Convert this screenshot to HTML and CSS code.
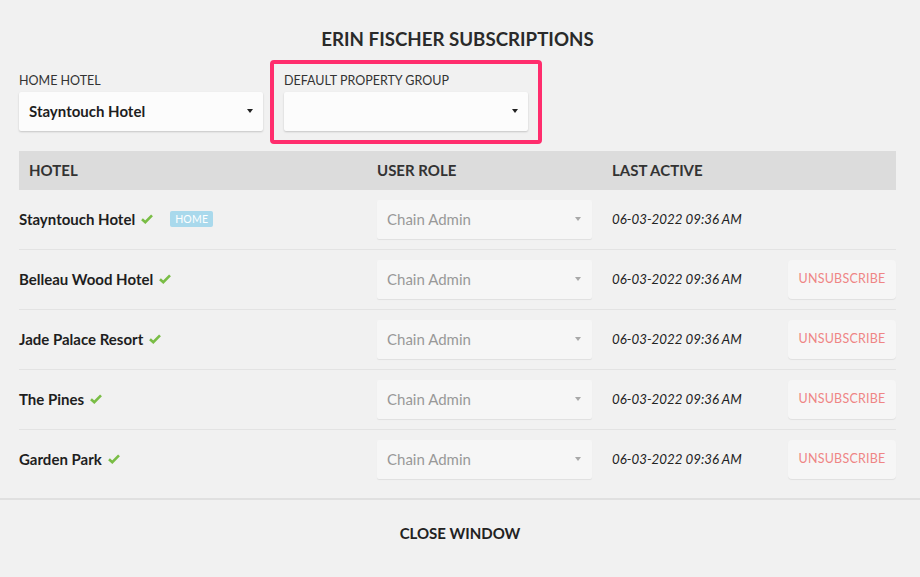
FILE: index.html
```html
<!DOCTYPE html>
<html>
<head>
<meta charset="utf-8">
<link rel="stylesheet" href="styles.css">
</head>
<body>
<div class="modal">
  <div class="content">
    <h1 class="title">ERIN FISCHER SUBSCRIPTIONS</h1>
    <div class="fields">
      <div class="field">
        <div class="label">HOME HOTEL</div>
        <div class="select strong"><span>Stayntouch Hotel</span><i class="caret"></i></div>
      </div>
      <div class="field highlight">
        <div class="label">DEFAULT PROPERTY GROUP</div>
        <div class="select strong"><span></span><i class="caret"></i></div>
      </div>
    </div>
    <div class="table">
      <div class="thead">
        <div class="th first">HOTEL</div>
        <div class="th">USER ROLE</div>
        <div class="th">LAST ACTIVE</div>
        <div class="th"></div>
      </div>
      <div class="row">
        <div class="hotel">Stayntouch Hotel <svg class="check" viewBox="0 0 12 10" width="12" height="10"><path d="M1 5.2 L4.3 8.2 L11 1.3" fill="none" stroke="#79bd45" stroke-width="2.6"/></svg><span class="badge">HOME</span></div>
        <div><div class="select role"><span>Chain Admin</span><i class="caret light"></i></div></div>
        <div class="date">06-03-2022 09:36 AM</div>
        <div></div>
      </div>
      <div class="row">
        <div class="hotel">Belleau Wood Hotel <svg class="check" viewBox="0 0 12 10" width="12" height="10"><path d="M1 5.2 L4.3 8.2 L11 1.3" fill="none" stroke="#79bd45" stroke-width="2.6"/></svg></div>
        <div><div class="select role"><span>Chain Admin</span><i class="caret light"></i></div></div>
        <div class="date">06-03-2022 09:36 AM</div>
        <div><button class="unsub">UNSUBSCRIBE</button></div>
      </div>
      <div class="row">
        <div class="hotel">Jade Palace Resort <svg class="check" viewBox="0 0 12 10" width="12" height="10"><path d="M1 5.2 L4.3 8.2 L11 1.3" fill="none" stroke="#79bd45" stroke-width="2.6"/></svg></div>
        <div><div class="select role"><span>Chain Admin</span><i class="caret light"></i></div></div>
        <div class="date">06-03-2022 09:36 AM</div>
        <div><button class="unsub">UNSUBSCRIBE</button></div>
      </div>
      <div class="row">
        <div class="hotel">The Pines <svg class="check" viewBox="0 0 12 10" width="12" height="10"><path d="M1 5.2 L4.3 8.2 L11 1.3" fill="none" stroke="#79bd45" stroke-width="2.6"/></svg></div>
        <div><div class="select role"><span>Chain Admin</span><i class="caret light"></i></div></div>
        <div class="date">06-03-2022 09:36 AM</div>
        <div><button class="unsub">UNSUBSCRIBE</button></div>
      </div>
      <div class="row last">
        <div class="hotel">Garden Park <svg class="check" viewBox="0 0 12 10" width="12" height="10"><path d="M1 5.2 L4.3 8.2 L11 1.3" fill="none" stroke="#79bd45" stroke-width="2.6"/></svg></div>
        <div><div class="select role"><span>Chain Admin</span><i class="caret light"></i></div></div>
        <div class="date">06-03-2022 09:36 AM</div>
        <div><button class="unsub">UNSUBSCRIBE</button></div>
      </div>
    </div>
  </div>
  <div class="footer">CLOSE WINDOW</div>
</div>
</body>
</html>
```

FILE: styles.css
```css
* { box-sizing: border-box; }
html, body { margin: 0; padding: 0; }
body {
  width: 920px;
  height: 577px;
  background: #f1f1f1;
  font-family: "Lato", "Open Sans", sans-serif;
  color: #222;
  overflow: hidden;
}
.modal { display: flex; flex-direction: column; height: 577px; }
.content { padding: 0 24px 0 19px; }
.title {
  margin: 0;
  padding-top: 28px;
  height: 60px;
  text-align: center;
  font-size: 18.7px;
  font-weight: 700;
  line-height: 22px;
  color: #2a2a2a;
}
.fields { display: flex; align-items: flex-start; gap: 7px; }
.field { width: 244px; margin-top: 14px; }
.field.highlight {
  margin-top: 0;
  width: 272px;
  border: 4px solid #ff2d6d;
  border-radius: 4px;
  padding: 10px 10px 9px 10px;
}
.label {
  font-size: 12.5px;
  line-height: 14px;
  color: #333;
  margin-bottom: 4px;
}
.select {
  height: 39px;
  background: #fcfcfc;
  border-radius: 2px;
  box-shadow: 0 1px 2px rgba(0,0,0,0.18);
  display: flex;
  align-items: center;
  justify-content: space-between;
  padding: 0 10px 2px;
}
.select.strong { font-weight: 700; font-size: 15px; color: #1e1e1e; }
.caret {
  width: 0; height: 0;
  border-left: 3.5px solid transparent;
  border-right: 3.5px solid transparent;
  border-top: 4px solid #222;
}
.caret.light { border-top-color: #a8a8a8; }
.table { width: 877px; margin-top: 7px; }
.thead, .row {
  display: grid;
  grid-template-columns: 358px 235px 176px 108px;
  align-items: center;
}
.thead {
  height: 39px;
  background: #dcdcdc;
  font-weight: 700;
  font-size: 15px;
  color: #333;
  padding-bottom: 2px;
}
.th.first { padding-left: 10px; }
.row {
  height: 60px;
  border-bottom: 1px solid #e3e3e3;
}
.row.last { border-bottom: none; height: 59px; }
.hotel {
  font-weight: 700;
  font-size: 15px;
  color: #1e1e1e;
  display: flex;
  align-items: center;
  padding-bottom: 2px;
}
.check { margin-left: 6px; }
.badge {
  margin-left: 17px;
  background: #a9d9ec;
  color: #fff;
  font-size: 10.5px;
  font-weight: 400;
  letter-spacing: 0.2px;
  border-radius: 2px;
  padding: 0 5px;
  line-height: 16px;
}
.select.role {
  width: 215px;
  background: #f6f6f6;
  color: #999;
  font-size: 15px;
  font-weight: 400;
  box-shadow: 0 1px 1px rgba(0,0,0,0.07);
  padding-right: 11px;
}
.date { font-style: italic; font-size: 13.3px; color: #222; padding-bottom: 2px; }
.unsub {
  width: 108px;
  height: 39px;
  border: none;
  background: #f6f6f6;
  border-radius: 4px;
  box-shadow: 0 1px 1px rgba(0,0,0,0.07);
  color: #ef8585;
  font-family: inherit;
  font-size: 12.5px;
  font-weight: 400;
  letter-spacing: 0.2px;
  padding: 0 0 2px;
}
.footer {
  margin-top: 9px;
  border-top: 2px solid #e0e0e0;
  flex: 1;
  display: flex;
  align-items: center;
  justify-content: center;
  padding-bottom: 11px;
  font-weight: 700;
  font-size: 15px;
  color: #222;
}
```
